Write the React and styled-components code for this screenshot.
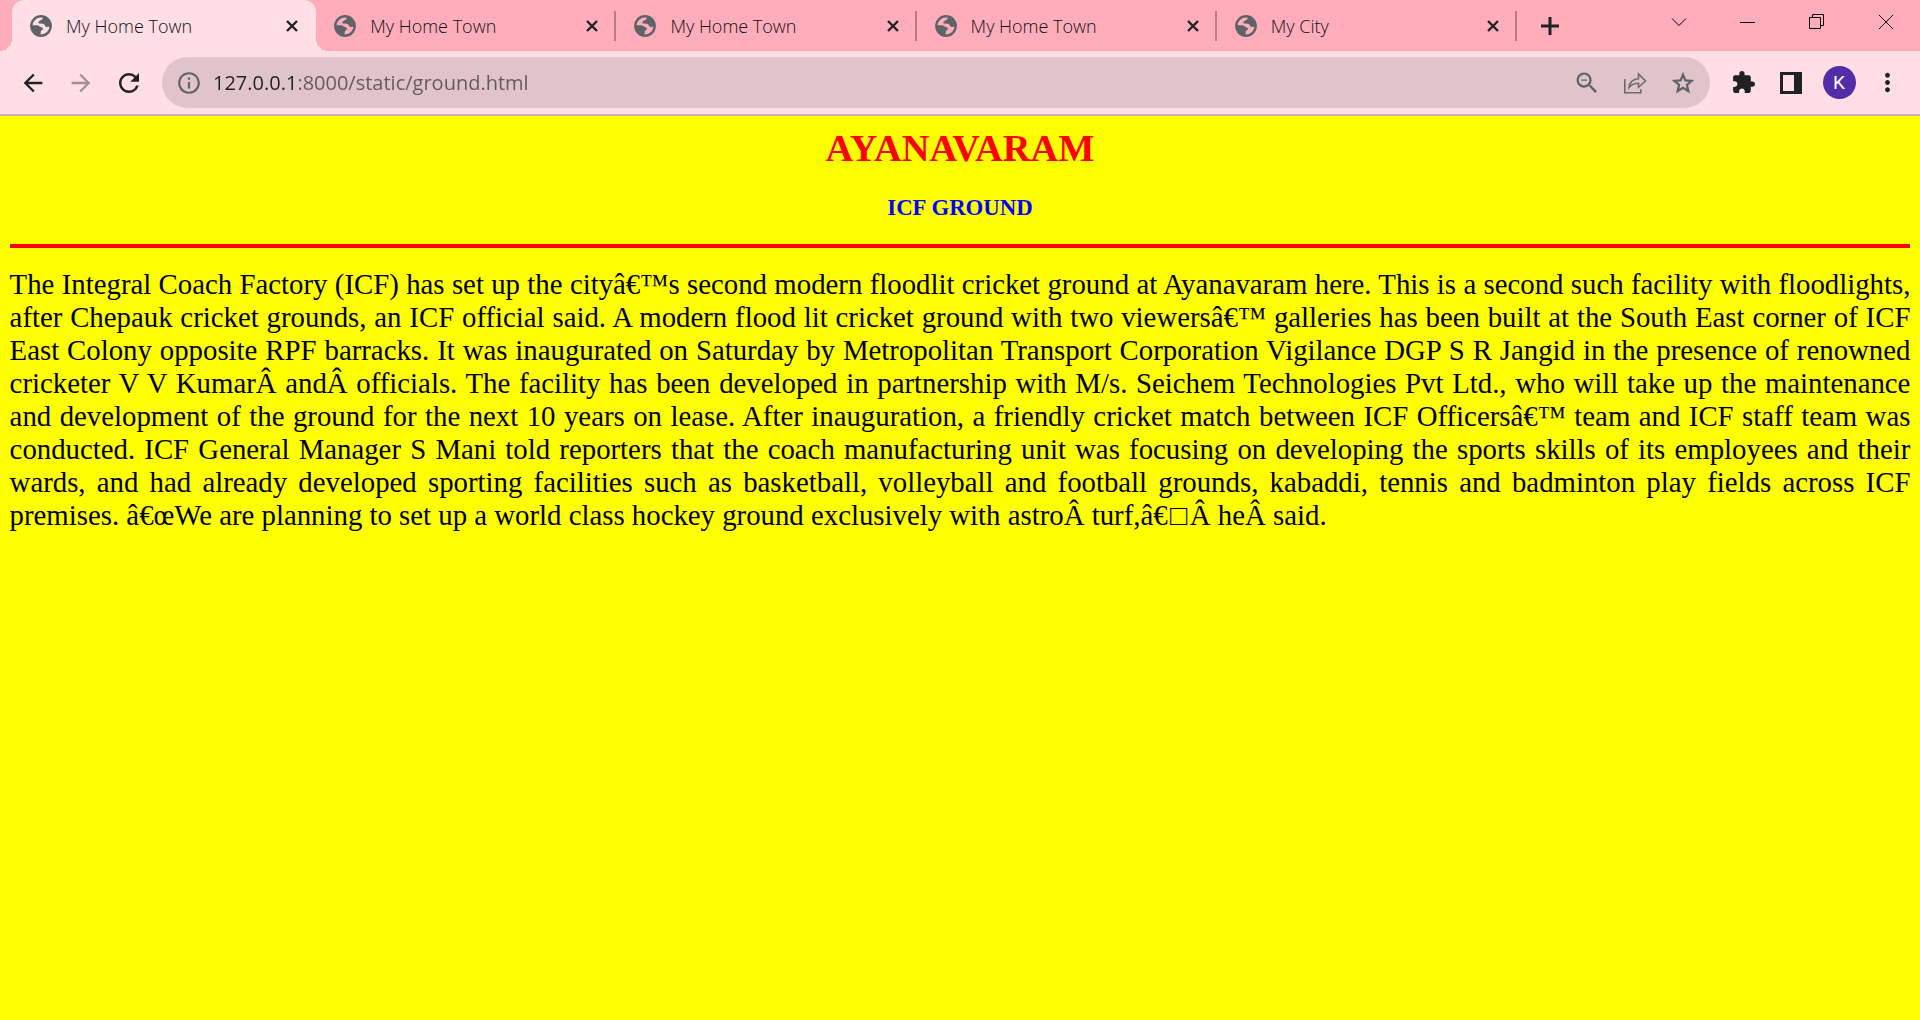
import React from 'react';
import styled, { createGlobalStyle, css } from 'styled-components';
import { MdArrowBack, MdArrowForward, MdRefresh, MdInfoOutline, MdZoomOut, MdExtension, MdMoreVert } from 'react-icons/md';

const GlobalStyle = createGlobalStyle`
  *, *::before, *::after { box-sizing: border-box; }
  html { background: #ffff00; }
  body { margin: 0; }
  button { border: 0; padding: 0; background: none; color: inherit; font: inherit; }
`;

const Browser = styled.div`
  min-height: 100vh;
  display: flex;
  flex-direction: column;
  font-family: "Open Sans", "Noto Sans", sans-serif;
  color: #202124;
`;

const TabStrip = styled.header`
  display: flex;
  height: 51px;
  padding-left: 12px;
  background: #ffadbb;
`;

const TabList = styled.nav`
  display: flex;
  flex: 0 1 1505px;
  min-width: 0;
`;

const Tab = styled.div`
  position: relative;
  display: flex;
  align-items: center;
  flex: 1 1 300px;
  min-width: 0;
  padding: 0 14px 0 18px;
  ${({ $active }) =>
    $active
      ? css`
          flex-basis: 304px;
          background: #ffdfe5;
          border-radius: 12px 12px 0 0;
          &::before,
          &::after {
            content: "";
            position: absolute;
            bottom: 0;
            width: 12px;
            height: 12px;
          }
          &::before {
            right: 100%;
            background: radial-gradient(circle at 0 0, transparent 12px, #ffdfe5 12px);
          }
          &::after {
            left: 100%;
            background: radial-gradient(circle at 100% 0, transparent 12px, #ffdfe5 12px);
          }
        `
      : css`
          &::after {
            content: "";
            position: absolute;
            right: 0;
            top: 11px;
            width: 2px;
            height: 30px;
            background: #b97c87;
          }
        `}
`;

const TabLink = styled.a`
  display: flex;
  flex: 1;
  align-items: center;
  gap: 14px;
  min-width: 0;
  color: #101114;
  font-size: 18px;
  font-weight: 300;
  line-height: 24px;
  white-space: nowrap;
  text-decoration: none;
`;

const TabClose = styled.button`
  display: grid;
  place-items: center;
  width: 20px;
  height: 24px;
`;

const NewTab = styled.button`
  display: grid;
  place-items: center;
  width: 42px;
  margin-left: 12px;
`;

const WindowControls = styled.div`
  display: flex;
  margin-left: auto;
  height: 43px;
`;

const WindowButton = styled.button`
  display: grid;
  place-items: center;
  width: 69px;
  color: #000000;
`;

const Toolbar = styled.div`
  display: flex;
  align-items: center;
  height: 65px;
  padding: 0 9px;
  background: #ffdfe5;
  border-bottom: 2px solid #cdb2b8;
`;

const ToolButton = styled.button`
  display: grid;
  place-items: center;
  width: 48px;
  height: 48px;
  color: ${({ $tone }) => $tone || '#202124'};
`;

const AddressBar = styled.form`
  display: flex;
  flex: 1;
  align-items: center;
  height: 51px;
  margin: 0 9px;
  padding: 0 3px;
  border-radius: 26px;
  background: #e0c4c9;
`;

const AddressInput = styled.input`
  flex: 1;
  min-width: 0;
  height: 32px;
  padding: 0;
  border: 0;
  outline: 0;
  color: transparent;
  background: linear-gradient(90deg, #202124 80px, #62595e 80px);
  background-clip: text;
  font-family: inherit;
  font-size: 20px;
`;

const Avatar = styled.span`
  display: grid;
  place-items: center;
  width: 33px;
  height: 33px;
  border-radius: 50%;
  background: #512da8;
  color: #ffffff;
  font-family: Roboto, sans-serif;
  font-size: 19px;
`;

const Page = styled.main`
  flex: 1;
  zoom: 120%;
  padding: 8px;
  background: #ffff00;
  font-family: "Liberation Serif", "Times New Roman", serif;
`;

const Title = styled.h1`
  margin: 0 0 21px;
  color: #ff0000;
  font-size: 32px;
  text-align: center;
`;

const Subtitle = styled.h3`
  margin: 0 0 19px;
  color: #0000ff;
  font-size: 19px;
  text-align: center;
`;

const Rule = styled.hr`
  height: 4px;
  margin: 0;
  border: 0;
  border-top: 4px solid #ff0000;
`;

const Article = styled.p`
  margin: 16px 0 0;
  color: #000000;
  font-size: 24px;
  text-align: justify;
`;

const MissingGlyph = styled.span`
  padding: 0 2px;
`;

const Globe = () => (
  <svg width="22" height="22" viewBox="0 0 22 22" aria-hidden="true">
    <circle cx="11" cy="11" r="9.700" fill="none" stroke="#5f6368" strokeWidth="2.400" />
    <path fill="#5f6368" d="M13 1.200C12.600 3.500 13 4 11.500 4.800L9 6.200C7.800 7 8.200 8.600 9.800 8.600L13 8.800C14.800 9 14.500 11.500 16.500 12L21 11.500C21 5.500 17 2 13 1.200zM1 10.300H7C9 10.300 9.500 12 11.500 12.200C13.200 12.500 13.500 14.500 12 15.300C10.500 16 10.800 17 10.500 20.500C5 20.500 1 16 1 10.300z" />
  </svg>
);

const Cross = () => (
  <svg width="14" height="14" viewBox="0 0 14 14" aria-hidden="true">
    <path d="M2 2l10 10M12 2L2 12" stroke="#202124" strokeWidth="2.400" />
  </svg>
);

const Plus = () => (
  <svg width="20" height="20" viewBox="0 0 20 20" aria-hidden="true">
    <path d="M10 1v18M1 10h18" stroke="#202124" strokeWidth="3" />
  </svg>
);

const WindowIcon = ({ d }) => (
  <svg width="16" height="16" viewBox="0 0 16 16" fill="none" stroke="currentColor" aria-hidden="true">
    <path d={d} />
  </svg>
);

const ShareIcon = () => (
  <svg width="24" height="24" viewBox="0 0 24 24" fill="none" stroke="currentColor" strokeWidth="1.600" aria-hidden="true">
    <path d="M1.800 8v13.700h16V18" />
    <path d="M6 16.500c.6-5.500 4-8.500 9.500-8.800V3l7 7-7 6.300v-4.100c-4.500 0-7 1-9.500 4.300z" />
  </svg>
);

const StarIcon = () => (
  <svg width="26" height="26" viewBox="0 0 24 24" fill="none" stroke="currentColor" strokeWidth="2.100" aria-hidden="true">
    <path d="M12 4.300l2.200 5.300 5.700.5-4.300 3.700 1.300 5.600-4.900-3-4.900 3 1.300-5.600-4.300-3.700 5.700-.5z" />
  </svg>
);

const PanelIcon = () => (
  <svg width="22" height="22" viewBox="0 0 22 22" aria-hidden="true">
    <path fill="currentColor" fillRule="evenodd" d="M0 0h22v22H0zM3 3v16h11V3z" />
  </svg>
);

const tabs = ['My Home Town', 'My Home Town', 'My Home Town', 'My Home Town', 'My City'];

const controls = [
  ['Search tabs', 'M1 4.500l7 7 7-7'],
  ['Minimize', 'M0 8.500h15'],
  ['Restore', 'M.5 3.500h11v11H.5zM3.500 3.500v-3h11v11h-3'],
  ['Close', 'M1 1l14 14M15 1L1 15'],
];

const story =
  'The Integral Coach Factory (ICF) has set up the cityâ€™s second modern floodlit cricket ground at Ayanavaram here. This is a second such facility with floodlights, after Chepauk cricket grounds, an ICF official said. A modern flood lit cricket ground with two viewersâ€™ galleries has been built at the South East corner of ICF East Colony opposite RPF barracks. It was inaugurated on Saturday by Metropolitan Transport Corporation Vigilance DGP S R Jangid in the presence of renowned cricketer V V KumarÂ andÂ officials. The facility has been developed in partnership with M/s. Seichem Technologies Pvt Ltd., who will take up the maintenance and development of the ground for the next 10 years on lease. After inauguration, a friendly cricket match between ICF Officersâ€™ team and ICF staff team was conducted. ICF General Manager S Mani told reporters that the coach manufacturing unit was focusing on developing the sports skills of its employees and their wards, and had already developed sporting facilities such as basketball, volleyball and football grounds, kabaddi, tennis and badminton play fields across ICF premises. â€œWe are planning to set up a world class hockey ground exclusively with astroÂ turf,â€';

export default function App() {
  return (
    <Browser>
      <GlobalStyle />
      <TabStrip>
        <TabList aria-label="Tabs">
          {tabs.map((title, i) => (
            <Tab key={i} $active={i === 0}>
              <TabLink href="#">
                <Globe />
                {title}
              </TabLink>
              <TabClose type="button" aria-label="Close tab">
                <Cross />
              </TabClose>
            </Tab>
          ))}
        </TabList>
        <NewTab type="button" aria-label="New tab">
          <Plus />
        </NewTab>
        <WindowControls>
          {controls.map(([label, d]) => (
            <WindowButton key={label} type="button" aria-label={label}>
              <WindowIcon d={d} />
            </WindowButton>
          ))}
        </WindowControls>
      </TabStrip>
      <Toolbar>
        <ToolButton type="button" aria-label="Back"><MdArrowBack size={28} /></ToolButton>
        <ToolButton type="button" aria-label="Forward" $tone="#a08f94"><MdArrowForward size={28} /></ToolButton>
        <ToolButton type="button" aria-label="Reload"><MdRefresh size={30} /></ToolButton>
        <AddressBar onSubmit={(e) => e.preventDefault()}>
          <ToolButton type="button" aria-label="Site information" $tone="#5f6368"><MdInfoOutline size={26} /></ToolButton>
          <AddressInput aria-label="Address" defaultValue="127.0.0.1:8000/static/ground.html" spellCheck={false} />
          <ToolButton type="button" aria-label="Zoom" $tone="#5f6368"><MdZoomOut size={28} /></ToolButton>
          <ToolButton type="button" aria-label="Share" $tone="#6d6c70"><ShareIcon /></ToolButton>
          <ToolButton type="button" aria-label="Bookmark" $tone="#5f6368"><StarIcon /></ToolButton>
        </AddressBar>
        <ToolButton type="button" aria-label="Extensions"><MdExtension size={25} /></ToolButton>
        <ToolButton type="button" aria-label="Side panel"><PanelIcon /></ToolButton>
        <ToolButton type="button" aria-label="Profile"><Avatar>K</Avatar></ToolButton>
        <ToolButton type="button" aria-label="Menu"><MdMoreVert size={29} /></ToolButton>
      </Toolbar>
      <Page>
        <Title>AYANAVARAM</Title>
        <Subtitle>ICF GROUND</Subtitle>
        <Rule />
        <Article>
          {story}
          <MissingGlyph>□</MissingGlyph>
          Â heÂ said.
        </Article>
      </Page>
    </Browser>
  );
}
